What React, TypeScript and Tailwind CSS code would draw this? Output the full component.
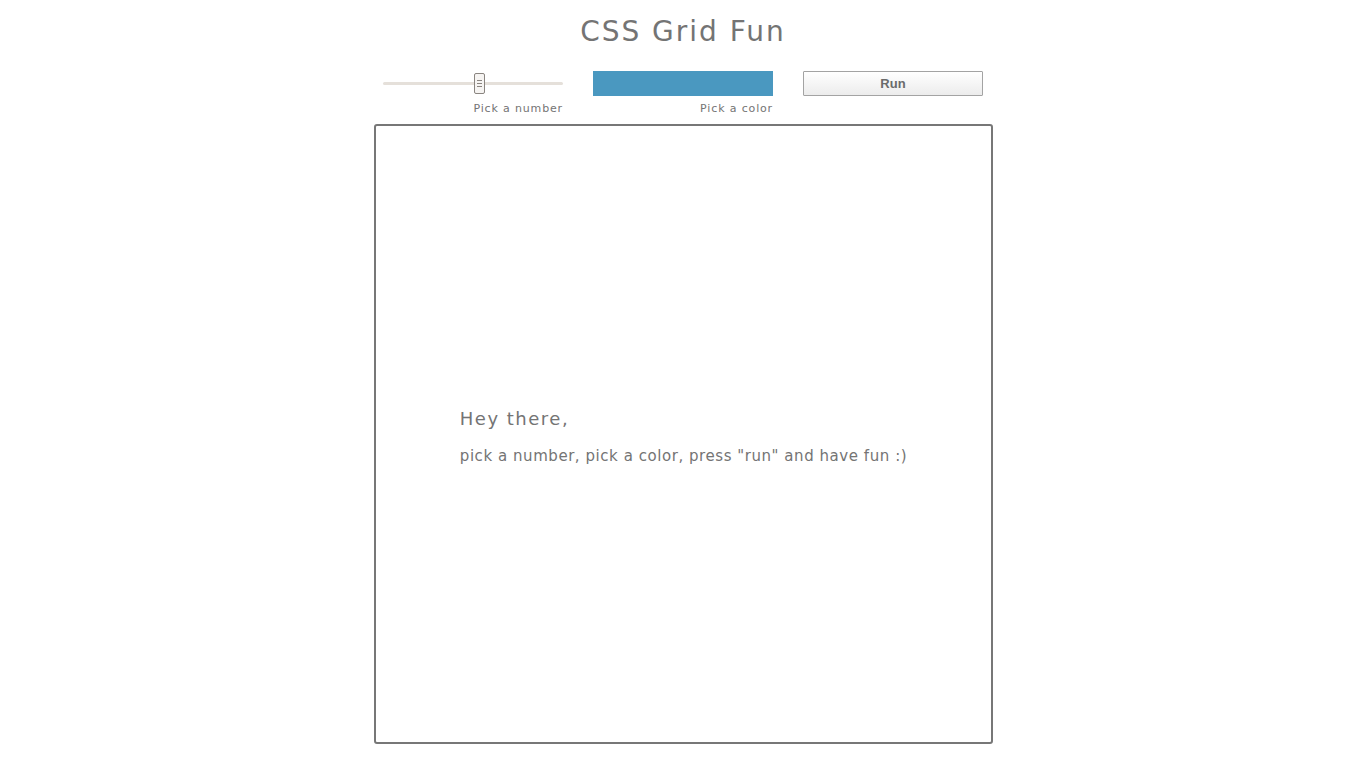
export default function App() {
  return (
    <div className="min-h-screen bg-white text-[#747474] font-['DejaVu_Sans',sans-serif]">
      <div className="flex flex-col items-center pt-[18px]">
        <h1 className="text-[28px] leading-[28px] font-normal tracking-[2px]">CSS Grid Fun</h1>

        <div className="mt-[25px] flex gap-[30px] w-[600px]">
          <div className="flex flex-col w-[180px]">
            <div className="relative h-[25px] flex items-center">
              <div className="w-full h-[3px] bg-[#e5e0da] rounded"></div>
              <div className="absolute left-[91px] top-[2px] w-[11px] h-[21px] bg-[#f6f4f2] border border-[#8a8580] rounded-[2px] flex flex-col items-center justify-center gap-[2px]">
                <div className="w-[5px] h-px bg-[#8a8580]"></div>
                <div className="w-[5px] h-px bg-[#8a8580]"></div>
                <div className="w-[5px] h-px bg-[#8a8580]"></div>
              </div>
            </div>
            <span className="mt-[6px] text-right text-[11px] leading-[13px] tracking-[0.85px]">Pick a number</span>
          </div>

          <div className="flex flex-col w-[180px]">
            <div className="h-[25px] bg-[#4a98c0]"></div>
            <span className="mt-[6px] text-right text-[11px] leading-[13px] tracking-[0.85px]">Pick a color</span>
          </div>

          <div className="w-[180px]">
            <button className="w-full h-[25px] border border-[#a3a3a3] bg-gradient-to-b from-white to-[#ececec] rounded-[1px] font-['Liberation_Sans',sans-serif] font-bold text-[13px] text-[#6b6b6b]">
              Run
            </button>
          </div>
        </div>

        <div className="mt-[9px] mr-[-1px] w-[619px] h-[620px] border-2 border-[#777] rounded-[3px] flex items-center justify-center">
          <div className="pt-[5px]">
            <p className="text-[18px] leading-[22px] tracking-[1.5px]">Hey there,</p>
            <p className="mt-[17px] text-[15px] leading-[18px] tracking-[0.55px]">pick a number, pick a color, press "run" and have fun :)</p>
          </div>
        </div>
      </div>
    </div>
  )
}
